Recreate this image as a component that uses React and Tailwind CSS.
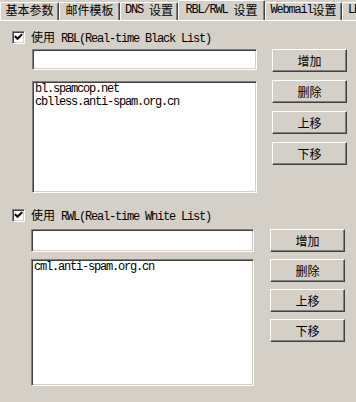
import React from "react";

function Zh({ children }) {
  return (
    <span className="font-['Noto_Sans_CJK_SC',sans-serif] text-[12px] tracking-normal">
      {children}
    </span>
  );
}
function En({ children }) {
  return (
    <span className="font-['Liberation_Mono',monospace] text-[12px] tracking-[-1.2px] whitespace-pre">
      {children}
    </span>
  );
}

const sunken =
  "border border-t-[#808080] border-l-[#808080] border-b-white border-r-white shadow-[inset_1px_1px_0_#404040,inset_-1px_-1px_0_#d4d0c8] bg-white";
const raised =
  "border border-t-white border-l-white border-b-[#404040] border-r-[#404040] shadow-[inset_-1px_-1px_0_#808080] bg-[#d4d0c8]";

function Check() {
  return (
    <span className={`${sunken} w-[13px] h-[13px] flex items-center justify-center shrink-0`}>
      <svg width="9" height="9" viewBox="0 0 9 9">
        <polyline points="1.5,3.8 3.5,5.8 7.5,1.8" fill="none" stroke="#000" strokeWidth="2" strokeLinecap="square" />
      </svg>
    </span>
  );
}

function Btn({ children }) {
  return (
    <div className={`${raised} h-[23px] w-[75px] flex items-center justify-center leading-[12px] text-black`}>
      <Zh>{children}</Zh>
    </div>
  );
}

function Tab({ w, sel, left, children }) {
  return (
    <div
      style={{ width: w }}
      className={`shrink-0 flex items-start border-t border-l border-r border-t-white border-l-white border-r-[#404040] shadow-[inset_-1px_0_0_#808080] rounded-t-[2px] leading-[12px] text-black whitespace-nowrap overflow-hidden ${
        left ? "justify-start pl-[5px]" : "justify-center"
      } ${sel ? "h-[21px] -mb-px relative z-10 bg-[#d4d0c8] pt-[3px]" : "h-[18px] pt-[1px]"}`}
    >
      {children}
    </div>
  );
}

export default function App() {
  return (
    <div className="w-[356px] h-[402px] bg-[#d4d0c8] overflow-hidden text-black">
      <div className="flex items-end h-[21px] border-b border-white overflow-hidden">
        <Tab w={59}>
          <Zh>基本参数</Zh>
        </Tab>
        <Tab w={61}>
          <Zh>邮件模板</Zh>
        </Tab>
        <Tab w={58}>
          <En>DNS </En>
          <Zh>设置</Zh>
        </Tab>
        <Tab w={87} sel>
          <En>RBL/RWL </En>
          <Zh>设置</Zh>
        </Tab>
        <Tab w={77}>
          <En>Webmail</En>
          <Zh>设置</Zh>
        </Tab>
        <Tab w={70} left>
          <En>LDAP</En>
          <Zh>设置</Zh>
        </Tab>
      </div>

      {/* RBL section */}
      <div className="pt-[10px]">
        <div className="flex items-center h-[13px] pl-[12px] gap-[6px] leading-[12px]">
          <Check />
          <span className="whitespace-nowrap">
            <Zh>使用</Zh>
            <En> RBL(Real-time Black List)</En>
          </span>
        </div>
        <div className="flex mt-[5px] pl-[32px]">
          <div className="w-[225px] flex flex-col">
            <div className={`${sunken} h-[21px]`} />
            <div className={`${sunken} h-[112px] mt-[11px] px-[2px] pt-[1px] leading-[13px] flex flex-col`}>
              <En>bl.spamcop.net</En>
              <En>cblless.anti-spam.org.cn</En>
            </div>
          </div>
          <div className="ml-[15px] flex flex-col gap-[8px]">
            <Btn>增加</Btn>
            <Btn>删除</Btn>
            <Btn>上移</Btn>
            <Btn>下移</Btn>
          </div>
        </div>
      </div>

      {/* RWL section */}
      <div className="pt-[16px]">
        <div className="flex items-center h-[13px] pl-[12px] gap-[6px] leading-[12px]">
          <Check />
          <span className="whitespace-nowrap">
            <Zh>使用</Zh>
            <En> RWL(Real-time White List)</En>
          </span>
        </div>
        <div className="flex mt-[7px] pl-[31px]">
          <div className="w-[223px] flex flex-col">
            <div className={`${sunken} h-[23px]`} />
            <div className={`${sunken} h-[127px] mt-[7px] px-[2px] pt-[1px] leading-[13px] flex flex-col`}>
              <En>cml.anti-spam.org.cn</En>
            </div>
          </div>
          <div className="ml-[16px] flex flex-col gap-[7px]">
            <Btn>增加</Btn>
            <Btn>删除</Btn>
            <Btn>上移</Btn>
            <Btn>下移</Btn>
          </div>
        </div>
      </div>
    </div>
  );
}
